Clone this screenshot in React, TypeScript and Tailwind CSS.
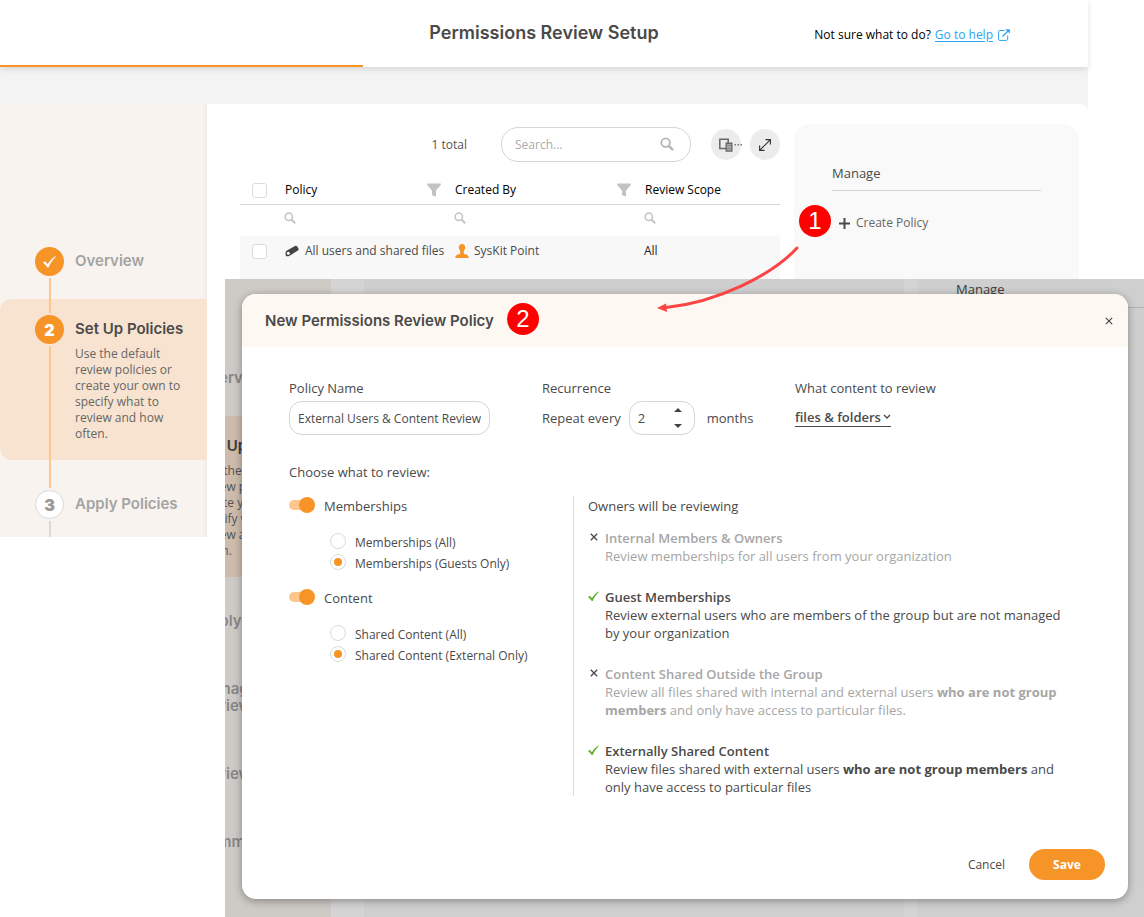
import React from "react";

const HEADING = "font-[Inter,sans-serif] font-semibold";

function SearchIcon({ className }: { className: string }) {
  return (
    <svg viewBox="0 0 12 12" className={className} fill="none" stroke="currentColor" aria-hidden="true">
      <circle cx="4.8" cy="4.8" r="3.7" strokeWidth="1.5" />
      <path d="M7.6 7.6 11.2 11.2" strokeWidth="2" />
    </svg>
  );
}

function FunnelIcon() {
  return (
    <svg viewBox="0 0 14 14" className="size-3.5 shrink-0 text-[#c3c3c3]" fill="currentColor" aria-hidden="true">
      <path d="M.2.5h13.6v1.6L9 7.6v5.9l-4-1.3V7.6L.2 2.1z" />
    </svg>
  );
}

function MarkerIcon() {
  return (
    <svg viewBox="0 0 14 12" className="h-3 w-3.5 shrink-0" aria-hidden="true">
      <path d="M.5 8.200C.5 7 1 6.200 2 5.600L10 .9c.8-.4 1.600-.2 2 .4l1.400 2.300c.4.7.2 1.500-.5 1.900L4.600 10.700c-1 .6-2 .7-3.500.5C.7 10.400.5 9.300.5 8.200z" fill="#444" />
      <circle cx="3.300" cy="8.200" r="1.500" fill="#fff" />
    </svg>
  );
}

function PersonIcon() {
  return (
    <svg viewBox="0 0 14 14" className="size-3.5 shrink-0 text-[#f79428]" fill="currentColor" aria-hidden="true">
      <path d="M7 0c2 0 3.200 1.300 3.200 3.300 0 1.500-.6 3-1.400 3.800v2.100c0 .6.4.9 1.200 1.100 2.200.6 3.600 1.200 3.600 2.500V14H.4v-1.200c0-1.300 1.400-1.900 3.600-2.500.8-.2 1.200-.5 1.200-1.100V7.100C4.400 6.300 3.800 4.800 3.800 3.300 3.800 1.300 5 0 7 0z" />
    </svg>
  );
}

function CheckIcon({ className }: { className: string }) {
  return (
    <svg viewBox="0 0 13 12" className={className} fill="currentColor" aria-hidden="true">
      <path d="M.2 6.600 2 5.200 4.700 8.200C6.500 5 9 2.200 12.300.2L12.900.8C9.900 3.600 7.400 7 5.500 11.400H4.600z" />
    </svg>
  );
}

function CrossIcon({ className }: { className: string }) {
  return (
    <svg viewBox="0 0 10 10" className={className} fill="none" stroke="currentColor" aria-hidden="true">
      <path d="M1 1 9 9M9 1 1 9" />
    </svg>
  );
}

function ExternalIcon() {
  return (
    <svg viewBox="0 0 12 12" className="size-3 text-[#2aa3ef]" fill="none" stroke="currentColor" aria-hidden="true">
      <path d="M6.500 1.500H1.800C1 1.500.6 2 .6 2.600v7.600c0 .7.4 1.200 1.200 1.200h6.700c.7 0 1.200-.5 1.200-1.200V6.500" />
      <path d="M4.500 7.500 10 2" strokeWidth="1.300" />
      <path d="M7.300.2h4.500v4.500z" fill="currentColor" stroke="none" />
    </svg>
  );
}

function Header() {
  return (
    <header className="relative z-10 flex h-[67px] flex-col bg-white shadow-[0_2px_6px_rgba(0,0,0,0.12)]">
      <div className="grid flex-1 grid-cols-[1fr_auto_1fr] items-center">
        <h1 className={`${HEADING} col-start-2 text-[18px] leading-6 text-[#4a4a4a]`}>Permissions Review Setup</h1>
        <div className="mr-[78px] flex items-center justify-end pt-1 text-[12px] leading-4 text-black">
          <span>Not sure what to do?</span>
          <a href="#help" className="ml-1 flex items-center gap-[5px] text-[#2aa3ef]">
            <span className="underline underline-offset-2">Go to help</span>
            <ExternalIcon />
          </a>
        </div>
      </div>
      <div className="h-0.5 w-1/3 bg-[#f79428]" />
    </header>
  );
}

function Step({
  marker,
  title,
  text,
  state,
}: {
  marker: React.ReactNode;
  title: string;
  text?: string;
  state: "done" | "active" | "next";
}) {
  const active = state === "active";
  return (
    <li className={active ? "flex rounded-l-xl bg-[#f7e3cf]" : "flex"}>
      <div className="ml-[35px] flex flex-col items-center">
        <div className={state === "done" ? "h-0" : active ? "mb-0.5 h-3.5 w-0.5 bg-[#fcc68c]" : "mb-0.5 h-7 w-0.5 bg-[#fcc68c]"} />
        <div
          className={
            state === "next"
              ? "flex size-[29px] shrink-0 items-center justify-center rounded-full border border-[#dadada] bg-white font-[Inter,sans-serif] text-[16px] font-black text-[#999]"
              : "flex size-[29px] shrink-0 items-center justify-center rounded-full bg-[#f79428] font-[Inter,sans-serif] text-[16px] font-black text-white"
          }
        >
          {marker}
        </div>
        <div className={state === "next" ? "mt-0.5 h-4 w-0.5 bg-[#dadada]" : "mt-0.5 w-0.5 flex-1 bg-[#fcc68c]"} />
      </div>
      <div className={state === "done" ? "mb-7 ml-[11px] pt-1" : active ? "mb-[18px] ml-[11px] pt-5" : "ml-[11px] pt-[34px]"}>
        <h2 className={`${HEADING} text-[15px] leading-5 ${active ? "text-[#4a4a4a]" : "text-[#a3a3a3]"}`}>{title}</h2>
        {text && <p className="mt-[7px] w-28 text-[12px] leading-4 text-[#666]">{text}</p>}
      </div>
    </li>
  );
}

function Sidebar() {
  return (
    <nav aria-label="Setup steps" className="w-[207px] shrink-0 rounded-tl-lg bg-[#f8f3ef] pt-[143px] shadow-[inset_-5px_0_5px_-5px_rgba(0,0,0,0.08)]">
      <ol>
        <Step state="done" marker={<CheckIcon className="h-3 w-[13px]" />} title="Overview" />
        <Step
          state="active"
          marker="2"
          title="Set Up Policies"
          text="Use the default review policies or create your own to specify what to review and how often."
        />
        <Step state="next" marker="3" title="Apply Policies" />
      </ol>
    </nav>
  );
}

const BOX = "block size-[15px] appearance-none rounded-[3px] border border-[#dcdcdc] bg-white";

function PolicyTable() {
  return (
    <table className="mt-[15px] w-full table-fixed border-collapse text-left text-[12px] leading-4">
      <thead>
        <tr className="h-[27px] border-b border-[#d5d5d5] text-black">
          <th className="w-10 pl-3">
            <input type="checkbox" aria-label="Select all policies" className={BOX} />
          </th>
          <th className="w-[170px] px-[5px] font-normal">
            <div className="flex items-center justify-between pr-1">
              Policy <FunnelIcon />
            </div>
          </th>
          <th className="w-[190px] px-[5px] font-normal">
            <div className="flex items-center justify-between pr-1">
              Created By <FunnelIcon />
            </div>
          </th>
          <th className="px-[5px] font-normal">Review Scope</th>
        </tr>
      </thead>
      <tbody>
        <tr className="h-8 text-[#c3c3c3]">
          <td />
          <td className="px-1 pb-1"><SearchIcon className="size-3" /></td>
          <td className="px-1 pb-1"><SearchIcon className="size-3" /></td>
          <td className="px-1 pb-1"><SearchIcon className="size-3" /></td>
        </tr>
        <tr className="h-12 bg-[#f8f8f8] align-top text-[#4a4a4a]">
          <td className="pt-2 pl-3">
            <input type="checkbox" aria-label="Select All users and shared files" className={BOX} />
          </td>
          <td className="pt-[7px] pl-[5px]">
            <div className="flex items-center gap-1.5 whitespace-nowrap">
              <MarkerIcon /> All users and shared files
            </div>
          </td>
          <td className="pt-[7px] pl-[5px]">
            <div className="flex items-center gap-[5px]">
              <PersonIcon /> SysKit Point
            </div>
          </td>
          <td className="pt-[7px] pl-1 text-[#222]">All</td>
        </tr>
      </tbody>
    </table>
  );
}

function SetupPage() {
  return (
    <div className="mr-14 self-start bg-[#f3f3f3] [grid-area:1/1]">
      <Header />
      <div className="mt-[37px] flex rounded-t-lg bg-white">
        <Sidebar />
        <main className="flex min-w-0 flex-1 gap-3.5 pr-[9px] pl-[33px]">
          <section className="min-w-0 flex-1 pt-[23px]">
            <div className="flex items-center justify-end">
              <span className="mr-[34px] text-[12px] text-[#555]">1 total</span>
              <label className="flex h-[35px] w-[190px] items-center rounded-[17px] border border-[#d5d5d5] pr-4 pl-[13px]">
                <input type="search" aria-label="Search policies" placeholder="Search..." className="w-full min-w-0 text-[12px] outline-none placeholder:text-[#aaa]" />
                <SearchIcon className="mb-0.5 size-3.5 shrink-0 text-[#b5b5b5]" />
              </label>
              <button type="button" aria-label="Columns" className="ml-5 flex h-[31px] w-[30px] items-center rounded-full bg-[#ececec] pl-2">
                <svg viewBox="0 0 23 14" className="h-3.5 w-[23px] shrink-0" aria-hidden="true">
                  <path d="M.8 1.200h8.400v9.300H.8z" fill="none" stroke="#666" strokeWidth="1.500" />
                  <path d="M7.200 5.200h5.600v7.800H7.200z" fill="#ececec" stroke="#666" strokeWidth="1.400" />
                  <path d="M8 7.200h4M8 9h4M8 10.900h4" stroke="#666" strokeWidth="1.200" />
                  <path d="M15.500 6h1.500v1.500h-1.500zM18.500 6H20v1.500h-1.500zM21.500 6H23v1.500h-1.500z" fill="#777" />
                </svg>
              </button>
              <button type="button" aria-label="Expand" className="ml-[9px] flex h-[31px] w-[30px] items-center justify-center rounded-full bg-[#ececec]">
                <svg viewBox="0 0 12 12" className="size-3" fill="none" stroke="#333" aria-hidden="true">
                  <path d="M.8 11.200 11.200.8M6.500.6h4.900v4.900M.6 6.500v4.900h4.900" strokeWidth="1.100" />
                </svg>
              </button>
            </div>
            <PolicyTable />
          </section>
          <aside className="relative mt-5 w-[285px] shrink-0 rounded-t-2xl bg-[#f9f9f9] px-[38px] pt-10">
            <h2 className="border-b border-[#d5d5d5] pb-2 text-[13px] leading-[18px] text-[#4a4a4a]">Manage</h2>
            <button type="button" className="mt-6 ml-[7px] flex items-center gap-1.5 text-[12px] leading-4 text-[#666]">
              <svg viewBox="0 0 11 11" className="size-[11px]" stroke="#4a4a4a" strokeWidth="2" aria-hidden="true">
                <path d="M5.500 0v11M0 5.500h11" />
              </svg>
              Create Policy
            </button>
            <Badge className="absolute top-[81px] left-[5px]">1</Badge>
          </aside>
        </main>
      </div>
    </div>
  );
}

function Badge({ children, className }: { children: React.ReactNode; className: string }) {
  return (
    <span className={`flex size-8 items-center justify-center rounded-full bg-[#f00] font-['Liberation_Sans',sans-serif] text-[24px] leading-8 text-white ${className}`}>
      {children}
    </span>
  );
}

function Backdrop() {
  const title = `${HEADING} text-[15px] leading-[17px] text-[#a3a3a3]`;
  return (
    <div aria-hidden="true" className="absolute inset-0 flex overflow-hidden bg-white">
      <div className="w-[106px] shrink-0 overflow-hidden bg-[#f8f3ef] pt-[90px]">
        <div className="-ml-[26px]">
          <p className={title}>Overview</p>
          <div className="mt-[30px] bg-[#f7e3cf] pt-[21px] pb-[18px]">
            <p className={`${HEADING} text-[15px] leading-[17px] text-[#4a4a4a]`}>Set Up Policies</p>
            <p className="mt-[9px] w-28 text-[12px] leading-4 text-[#666]">
              Use the default review policies or create your own to specify what to review and how often.
            </p>
          </div>
          <p className={`${title} mt-[35px]`}>Apply Policies</p>
          <p className={`${title} mt-[51px] w-20`}>Manage Reviews</p>
          <p className={`${title} mt-[51px]`}>Review</p>
          <p className={`${title} mt-[51px]`}>Summary</p>
        </div>
      </div>
      <div className="ml-[33px] flex-1 bg-[#f9f9f9]" />
      <div className="ml-3.5 w-[226px] shrink-0 bg-[#f9f9f9] pl-[38px]">
        <p className="border-b border-[#d5d5d5] pt-px pb-[9px] text-[13px] leading-[18px] text-[#4a4a4a]">Manage</p>
      </div>
      <div className="absolute inset-0 bg-black/17" />
    </div>
  );
}

function Toggle({ label }: { label: string }) {
  return (
    <label className="flex h-[18px] items-center gap-[9px]">
      <input
        type="checkbox"
        role="switch"
        defaultChecked
        className="relative mb-[3px] h-4 w-[26px] appearance-none before:absolute before:top-[3px] before:left-0 before:h-2.5 before:w-5 before:rounded-full before:bg-[#dadada] after:absolute after:top-0 after:left-0 after:size-4 after:rounded-full after:bg-[#aaa] checked:before:bg-[#fcc68c] checked:after:left-2.5 checked:after:bg-[#f79428]"
      />
      {label}
    </label>
  );
}

function RadioPair({ name, options }: { name: string; options: [string, string] }) {
  return (
    <div className="mt-[17px] ml-[41px] flex flex-col text-[12px]">
      {options.map((option, index) => (
        <label key={option} className="flex h-[21px] items-center gap-[9px]">
          <input
            type="radio"
            name={name}
            defaultChecked={index === 1}
            className="mb-[3px] flex size-4 appearance-none items-center justify-center rounded-full border border-[#dadada] after:size-2 after:rounded-full checked:after:bg-[#f79428]"
          />
          {option}
        </label>
      ))}
    </div>
  );
}

function ReviewItem({ included, title, children }: { included: boolean; title: string; children: React.ReactNode }) {
  return (
    <li className={included ? "flex gap-1.5" : "flex gap-1.5 text-[#a6a6a6]"}>
      {included ? (
        <CheckIcon className="mt-[3px] h-[11px] w-[11px] shrink-0 text-[#63ad22]" />
      ) : (
        <CrossIcon className="mt-1 mr-px ml-0.5 size-2 shrink-0 stroke-[1.7] text-[#4a4a4a]" />
      )}
      <div>
        <h3 className="font-semibold">{title}</h3>
        <p>{children}</p>
      </div>
    </li>
  );
}

function PolicyDialog() {
  return (
    <div
      role="dialog"
      aria-labelledby="dialog-title"
      className="relative overflow-hidden rounded-[14px] bg-white text-[13px] leading-[18px] text-[#4a4a4a] shadow-[0_2px_8px_rgba(0,0,0,0.35)]"
    >
      <div className="flex h-[53px] items-center bg-[#fef8f2] pr-3.5 pl-[23px]">
        <h2 id="dialog-title" className={`${HEADING} text-[15px] leading-5`}>New Permissions Review Policy</h2>
        <Badge className="mb-1 ml-[13px]">2</Badge>
        <button type="button" aria-label="Close" className="ml-auto p-px">
          <CrossIcon className="size-2 stroke-[1.500]" />
        </button>
      </div>
      <div className="px-[47px] pt-8">
        <div className="grid grid-cols-[253px_253px_1fr]">
          <div className="flex flex-col items-start gap-1">
            <label htmlFor="policy-name">Policy Name</label>
            <input
              id="policy-name"
              type="text"
              defaultValue="External Users & Content Review"
              className="h-[34px] w-[201px] rounded-[13px] border border-[#d5d5d5] px-2 text-[12px] outline-none"
            />
          </div>
          <div className="flex flex-col gap-1">
            <label htmlFor="repeat">Recurrence</label>
            <div className="flex items-center">
              <span>Repeat every</span>
              <div className="mr-3 ml-2 flex h-[34px] w-[66px] items-center justify-between rounded-[13px] border border-[#d5d5d5] pr-3 pl-2">
                <input id="repeat" type="text" inputMode="numeric" defaultValue="2" className="w-8 min-w-0 text-[13px] outline-none" />
                <div className="flex flex-col gap-3">
                  <button type="button" aria-label="Increase">
                    <svg viewBox="0 0 8 4" className="block h-1 w-2" fill="#444"><path d="M0 4 4 0l4 4z" /></svg>
                  </button>
                  <button type="button" aria-label="Decrease">
                    <svg viewBox="0 0 8 4" className="block h-1 w-2" fill="#444"><path d="M0 0h8L4 4z" /></svg>
                  </button>
                </div>
              </div>
              <span>months</span>
            </div>
          </div>
          <div className="flex flex-col items-start">
            <span>What content to review</span>
            <button type="button" className="mt-[11px] flex items-center gap-0.5 border-b border-[#4a4a4a] font-semibold">
              files &amp; folders
              <svg viewBox="0 0 8 6" className="h-1.5 w-2" fill="none" stroke="currentColor" strokeWidth="1.400" aria-hidden="true">
                <path d="M1 1l3 3 3-3" />
              </svg>
            </button>
          </div>
        </div>
        <p className="mt-7">Choose what to review:</p>
        <div className="mt-[15px] grid grid-cols-[284px_1fr]">
          <div className="pt-px">
            <Toggle label="Memberships" />
            <RadioPair name="memberships" options={["Memberships (All)", "Memberships (Guests Only)"]} />
            <div className="h-[15px]" />
            <Toggle label="Content" />
            <RadioPair name="content" options={["Shared Content (All)", "Shared Content (External Only)"]} />
          </div>
          <div className="border-l border-[#dadada] pt-px pl-3.5">
            <h3>Owners will be reviewing</h3>
            <ul className="mt-3.5 flex max-w-[480px] flex-col gap-[23px]">
              <ReviewItem included={false} title="Internal Members & Owners">
                Review memberships for all users from your organization
              </ReviewItem>
              <ReviewItem included title="Guest Memberships">
                Review external users who are members of the group but are not managed by your organization
              </ReviewItem>
              <ReviewItem included={false} title="Content Shared Outside the Group">
                Review all files shared with internal and external users <strong>who are not group members</strong> and only have access to particular files.
              </ReviewItem>
              <ReviewItem included title="Externally Shared Content">
                Review files shared with external users <strong>who are not group members</strong> and only have access to particular files
              </ReviewItem>
            </ul>
          </div>
        </div>
      </div>
      <div className="mt-[53px] flex items-center justify-end gap-6 pr-[23px] pb-[19px] text-[12px]">
        <button type="button">Cancel</button>
        <button type="button" className="h-[31px] w-[76px] rounded-full bg-[#f79428] font-bold text-white">Save</button>
      </div>
    </div>
  );
}

export default function App() {
  return (
    <div className="relative grid min-h-screen grid-cols-1 bg-white font-['Open_Sans',sans-serif]">
      <SetupPage />
      <div className="relative mt-[279px] ml-[225px] pt-[15px] pr-4 pb-[18px] pl-[17px] [grid-area:1/1]">
        <Backdrop />
        <PolicyDialog />
      </div>
      <svg viewBox="0 0 144 68" className="pointer-events-none absolute top-[245px] left-[656px] z-20 h-[68px] w-36" fill="none" aria-hidden="true">
        <path d="M141 3C116 30 62 57 10 62.500" stroke="#fb4444" strokeWidth="3" strokeLinecap="round" />
        <path d="M1 63 10 58.500 11 67z" fill="#fb4444" />
      </svg>
    </div>
  );
}
